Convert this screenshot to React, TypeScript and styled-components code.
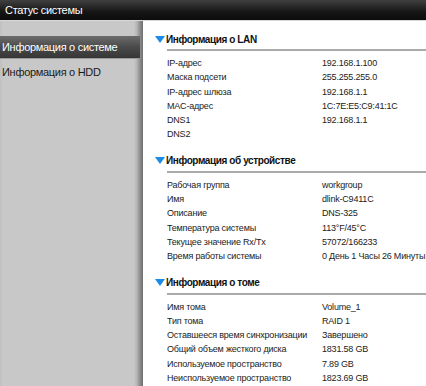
import React from 'react'
import styled, { createGlobalStyle } from 'styled-components'

type Row = [string, string]

type Section = {
  title: string
  rows: Row[]
}

const sections: Section[] = [
  {
    title: 'Информация о LAN',
    rows: [
      ['IP-адрес', '192.168.1.100'],
      ['Маска подсети', '255.255.255.0'],
      ['IP-адрес шлюза', '192.168.1.1'],
      ['MAC-адрес', '1C:7E:E5:C9:41:1C'],
      ['DNS1', '192.168.1.1'],
      ['DNS2', ''],
    ],
  },
  {
    title: 'Информация об устройстве',
    rows: [
      ['Рабочая группа', 'workgroup'],
      ['Имя', 'dlink-C9411C'],
      ['Описание', 'DNS-325'],
      ['Температура системы', '113°F/45°C'],
      ['Текущее значение Rx/Tx', '57072/166233'],
      ['Время работы системы', '0 День 1 Часы 26 Минуты'],
    ],
  },
  {
    title: 'Информация о томе',
    rows: [
      ['Имя тома', 'Volume_1'],
      ['Тип тома', 'RAID 1'],
      ['Оставшееся время синхронизации', 'Завершено'],
      ['Общий объем жесткого диска', '1831.58 GB'],
      ['Используемое пространство', '7.89 GB'],
      ['Неиспользуемое пространство', '1823.69 GB'],
    ],
  },
]

const menu = ['Информация о системе', 'Информация о HDD']

const GlobalStyle = createGlobalStyle`
  html, body {
    margin: 0;
    padding: 0;
    height: 100%;
    overflow: hidden;
    background: #ffffff;
    font-family: 'Liberation Sans', Arial, sans-serif;
  }
`

const App = () => {
  return (
    <Page>
      <GlobalStyle />
      <TopBar>Статус системы</TopBar>
      <Body>
        <Sidebar>
          {menu.map((item, i) => (
            <MenuItem key={item} active={i === 0}>
              {item}
            </MenuItem>
          ))}
        </Sidebar>
        <Content>
          {sections.map((section) => (
            <Block key={section.title}>
              <Heading>
                <Arrow />
                <HeadingText>{section.title}</HeadingText>
              </Heading>
              <Table>
                {section.rows.map(([label, value]) => (
                  <React.Fragment key={label}>
                    <Label>{label}</Label>
                    <Value>{value}</Value>
                  </React.Fragment>
                ))}
              </Table>
            </Block>
          ))}
        </Content>
      </Body>
    </Page>
  )
}

export default App

const Page = styled.div`
  display: flex;
  flex-direction: column;
  width: 426px;
  height: 386px;
  overflow: hidden;
`

const TopBar = styled.div`
  flex: 0 0 20px;
  display: flex;
  align-items: center;
  padding-left: 5px;
  color: #ffffff;
  font-size: 11px;
  letter-spacing: -0.3px;
  background: linear-gradient(#404040, #151515 60%, #0c0c0c);
  border-bottom: 1px solid #d8d8d8;
`

const Body = styled.div`
  flex: 1;
  display: flex;
  min-height: 0;
`

const Sidebar = styled.div`
  flex: 0 0 143px;
  display: flex;
  flex-direction: column;
  padding-top: 15px;
  box-sizing: border-box;
  background: linear-gradient(
    to right,
    #c0c0c0 0px,
    #c8c8c8 3px,
    #c8c8c8 134px,
    #b4b4b4 137px,
    #8c8c8c 140px,
    #6e6e6e 143px
  );
`

const MenuItem = styled.div<{ active: boolean }>`
  height: ${({ active }) => (active ? 22 : 26)}px;
  display: flex;
  align-items: center;
  padding-left: 2px;
  margin-right: 3px;
  font-size: 11px;
  letter-spacing: -0.3px;
  color: ${({ active }) => (active ? '#ffffff' : '#1a1a1a')};
  background: ${({ active }) =>
    active ? 'linear-gradient(#6c6c6c, #4a4a4a 50%, #363636)' : 'transparent'};
  border-bottom: ${({ active }) => (active ? '1px solid #9a9a9a' : 'none')};
`

const Content = styled.div`
  flex: 1;
  padding: 11px 0 0 12px;
  background: #ffffff;
`

const Block = styled.div`
  margin-bottom: 12px;
`

const Heading = styled.div`
  display: flex;
  align-items: center;
  height: 14px;
  padding-bottom: 3px;
`

const Arrow = styled.span`
  width: 0;
  height: 0;
  border-left: 5px solid transparent;
  border-right: 5px solid transparent;
  border-top: 7px solid #1a8ce8;
  margin-right: 1px;
`

const HeadingText = styled.span`
  flex: 1;
  font-size: 10px;
  font-weight: bold;
  letter-spacing: -0.4px;
  color: #111111;
`

const Table = styled.div`
  display: grid;
  grid-template-columns: 155px 1fr;
  margin-left: 12px;
  padding-top: 5px;
  border-top: 2px solid #aaaaaa;
`

const Label = styled.div`
  height: 14.3px;
  line-height: 14.3px;
  padding-left: 0;
  font-size: 9px;
  letter-spacing: -0.2px;
  color: #222222;
  white-space: nowrap;
`

const Value = styled(Label)``
